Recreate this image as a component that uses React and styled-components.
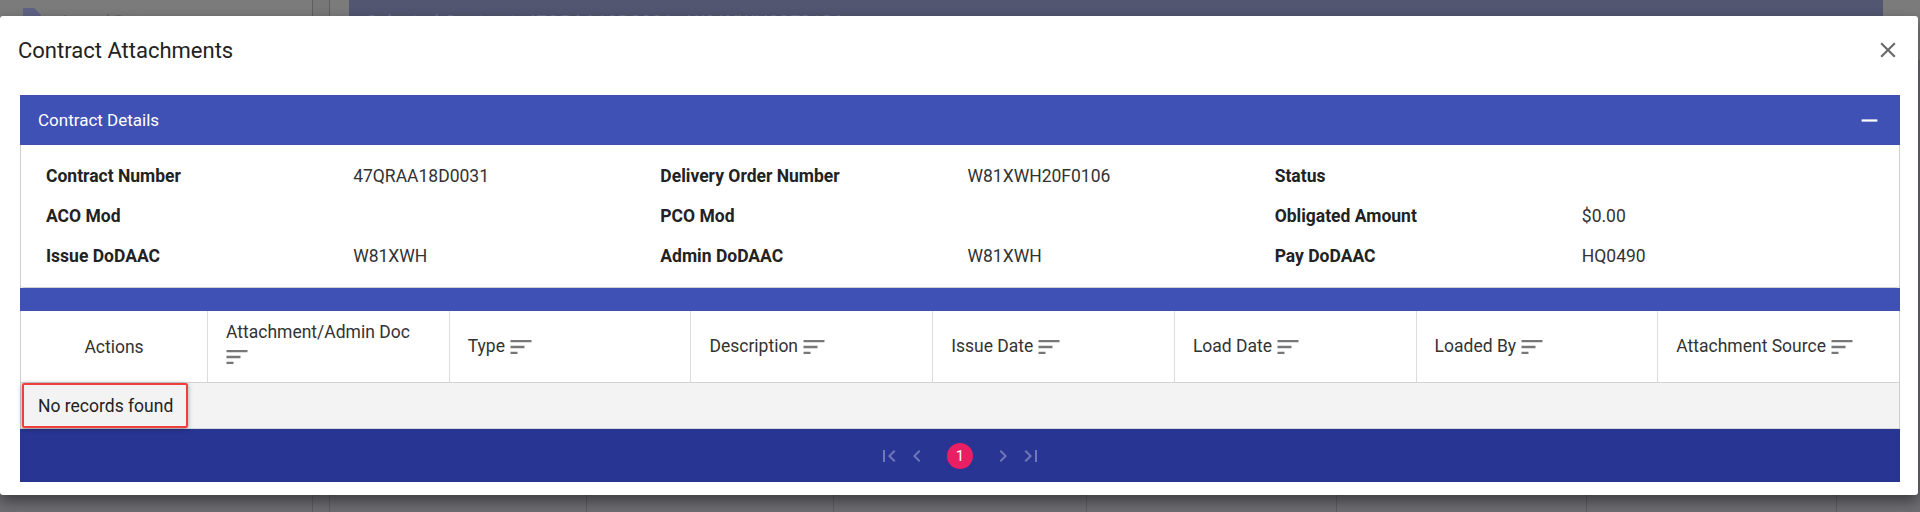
import React from "react";
import styled, { createGlobalStyle } from "styled-components";

const GlobalStyle = createGlobalStyle`
  * { box-sizing: border-box; }
  html, body { margin: 0; padding: 0; }
  body {
    font-family: Roboto, "Liberation Sans", Arial, sans-serif;
    background: #6d6d72;
  }
`;

const details = [
  ["Contract Number", "47QRAA18D0031"],
  ["Delivery Order Number", "W81XWH20F0106"],
  ["Status", ""],
  ["ACO Mod", ""],
  ["PCO Mod", ""],
  ["Obligated Amount", "$0.00"],
  ["Issue DoDAAC", "W81XWH"],
  ["Admin DoDAAC", "W81XWH"],
  ["Pay DoDAAC", "HQ0490"],
];

const columns = [
  { title: "Attachment/Admin Doc", stacked: true },
  { title: "Type" },
  { title: "Description" },
  { title: "Issue Date" },
  { title: "Load Date" },
  { title: "Loaded By" },
  { title: "Attachment Source" },
];

function SortIcon() {
  return (
    <SortSvg viewBox="0 0 24 24">
      <path d="M3 18h6v-2H3v2zM3 6v2h18V6H3zm0 7h12v-2H3v2z" />
    </SortSvg>
  );
}

function PageIcon({ d }) {
  return (
    <PagerButton>
      <svg width="24" height="24" viewBox="0 0 24 24">
        <path d={d} />
      </svg>
    </PagerButton>
  );
}

function App() {
  return (
    <Page>
      <GlobalStyle />

      <AppShell>
        <Sidebar>
          <NavItem>
            <svg width="20" height="24" viewBox="0 0 20 24">
              <path d="M2 0h11l7 7v17H2z" fill="#5f6283" />
            </svg>
            <span>Award Data</span>
          </NavItem>
        </Sidebar>
        <Rail />
        <Main>
          <ContractBar>Selected Contract: 47QRAA18D0031 - W81XWH20F0106</ContractBar>
          <BgTable>
            {[0, 1, 2, 3, 4, 5, 6].map((i) => (
              <BgCell key={i} />
            ))}
          </BgTable>
        </Main>
      </AppShell>

      <Dialog>
        <TitleRow>
          <Title>Contract Attachments</Title>
          <CloseButton>
            <svg width="26" height="26" viewBox="0 0 24 24">
              <path d="M19 6.41L17.59 5 12 10.59 6.41 5 5 6.41 10.59 12 5 17.59 6.41 19 12 13.41 17.59 19 19 17.59 13.41 12z" />
            </svg>
          </CloseButton>
        </TitleRow>

        <Panel>
          <PanelHeader>
            <span>Contract Details</span>
            <svg width="27" height="27" viewBox="0 0 24 24">
              <path d="M19 13H5v-2h14v2z" fill="#fff" />
            </svg>
          </PanelHeader>

          <DetailGrid>
            {details.map(([label, value]) => (
              <React.Fragment key={label}>
                <Label>{label}</Label>
                <Value>{value}</Value>
              </React.Fragment>
            ))}
          </DetailGrid>

          <Strip />

          <HeadRow>
            <HeadCell $width={187} $center>
              Actions
            </HeadCell>
            {columns.map((c) => (
              <HeadCell key={c.title} $stacked={c.stacked}>
                <span>{c.title}</span>
                <SortIcon />
              </HeadCell>
            ))}
          </HeadRow>

          <EmptyRow>
            <Highlight>No records found</Highlight>
          </EmptyRow>

          <Pager>
            <PageIcon d="M18.41 16.59L13.82 12l4.59-4.59L17 6l-6 6 6 6zM6 6h2v12H6z" />
            <PageIcon d="M15.41 7.41L14 6l-6 6 6 6 1.41-1.41L10.83 12z" />
            <PageNumber>1</PageNumber>
            <PageIcon d="M10 6L8.59 7.41 13.17 12l-4.58 4.59L10 18l6-6z" />
            <PageIcon d="M5.59 7.41L10.18 12l-4.59 4.59L7 18l6-6-6-6zM16 6h2v12h-2z" />
          </Pager>
        </Panel>
      </Dialog>
    </Page>
  );
}

export default App;

const Page = styled.div`
  position: relative;
  width: 1920px;
  height: 512px;
  overflow: hidden;
  background: #6d6d72;
`;

const AppShell = styled.div`
  display: grid;
  grid-template-columns: 313px 17px 1fr;
  height: 100%;
`;

const Sidebar = styled.div`
  border-right: 1px solid #5e5e62;
`;

const NavItem = styled.div`
  display: flex;
  align-items: flex-start;
  gap: 18px;
  height: 60px;
  padding: 8px 0 0 21px;
  background: #7b7b7b;
  color: #66666c;
  font-size: 18px;

  span {
    margin-top: 3px;
  }
`;

const Rail = styled.div`
  background: linear-gradient(#777 0, #777 60px, transparent 60px);
  border-right: 1px solid #5e5e62;
`;

const Main = styled.div`
  padding: 0 37px 0 19px;
  background: linear-gradient(#7b7b7b 0, #7b7b7b 60px, transparent 60px);
`;

const ContractBar = styled.div`
  height: 60px;
  padding: 10px 0 0 17px;
  background: #525670;
  color: #6c7190;
  font-size: 19px;
`;

const BgTable = styled.div`
  display: grid;
  grid-template-columns: 238px 247px 253px 250px 250px 250px 1fr;
  height: 452px;
`;

const BgCell = styled.div`
  border-right: 1px solid #5e5e62;

  &:last-child {
    border-right: none;
  }
`;

const Dialog = styled.div`
  position: absolute;
  top: 16px;
  left: 0;
  width: 1918px;
  height: 479px;
  padding: 0 18px 14px 20px;
  background: #fff;
  border-radius: 3px;
  box-shadow: 0 6px 14px rgba(0, 0, 0, 0.45);
`;

const TitleRow = styled.div`
  display: flex;
  align-items: center;
  justify-content: space-between;
  height: 68px;
  margin-bottom: 11px;
`;

const Title = styled.h2`
  margin: 0 0 0 -2px;
  font-size: 22px;
  font-weight: 400;
  color: #222;
`;

const CloseButton = styled.div`
  display: flex;
  margin-right: -1px;

  svg {
    fill: #6a6a6a;
  }
`;

const Panel = styled.div`
  border-left: 1px solid #cfcfcf;
  border-right: 1px solid #cfcfcf;
`;

const PanelHeader = styled.div`
  display: flex;
  align-items: center;
  justify-content: space-between;
  height: 50px;
  margin: 0 -1px;
  padding: 0 17px 0 18px;
  background: #3f51b5;
  color: #fff;
  font-size: 17px;
`;

const DetailGrid = styled.div`
  display: grid;
  grid-template-columns: repeat(6, 1fr);
  grid-auto-rows: 40px;
  align-items: center;
  padding: 11px 10px 11px 25px;
  border-bottom: 1px solid #d0d0d0;
  border-radius: 0 0 3px 3px;
`;

const Label = styled.div`
  font-size: 17.5px;
  font-weight: 700;
  color: #222;
`;

const Value = styled.div`
  font-size: 17.5px;
  color: #333;
`;

const Strip = styled.div`
  height: 23px;
  margin: 0 -1px;
  background: #3f51b5;
`;

const HeadRow = styled.div`
  display: flex;
  height: 72px;
  border-bottom: 1px solid #d3d3d3;
`;

const HeadCell = styled.div`
  flex: ${(p) => (p.$width ? `0 0 ${p.$width}px` : "1 1 0")};
  display: flex;
  flex-direction: ${(p) => (p.$stacked ? "column" : "row")};
  align-items: ${(p) => (p.$stacked ? "flex-start" : "center")};
  justify-content: ${(p) => (p.$center || p.$stacked ? "center" : "flex-start")};
  gap: ${(p) => (p.$stacked ? "0" : "5px")};
  padding: 0 18px;
  border-right: 1px solid #dcdcdc;
  font-size: 17.5px;
  color: #333;

  &:last-child {
    border-right: none;
  }

  span {
    line-height: 21px;
  }
`;

const SortSvg = styled.svg`
  width: 28px;
  height: 28px;
  flex: none;
  fill: #777;
  margin-left: -3px;
`;

const EmptyRow = styled.div`
  display: flex;
  height: 46px;
  background: #f3f3f3;
  border-bottom: 1px solid #d8d8d8;
`;

const Highlight = styled.div`
  display: flex;
  align-items: center;
  width: 166px;
  margin-left: 1px;
  padding-left: 14px;
  border: 2px solid #ef4040;
  border-radius: 2px;
  box-shadow: 0 1px 5px rgba(0, 0, 0, 0.35);
  font-size: 17.5px;
  color: #222;
`;

const Pager = styled.div`
  display: flex;
  align-items: center;
  justify-content: center;
  gap: 2px;
  height: 53px;
  margin: 0 -1px;
  background: #283593;
`;

const PagerButton = styled.div`
  display: flex;
  align-items: center;
  justify-content: center;
  width: 26px;
  height: 26px;

  svg {
    fill: #6f78b9;
  }
`;

const PageNumber = styled.div`
  display: flex;
  align-items: center;
  justify-content: center;
  width: 26px;
  height: 26px;
  margin: 0 15px;
  border-radius: 50%;
  background: #e91e63;
  color: #fff;
  font-size: 15px;
`;
